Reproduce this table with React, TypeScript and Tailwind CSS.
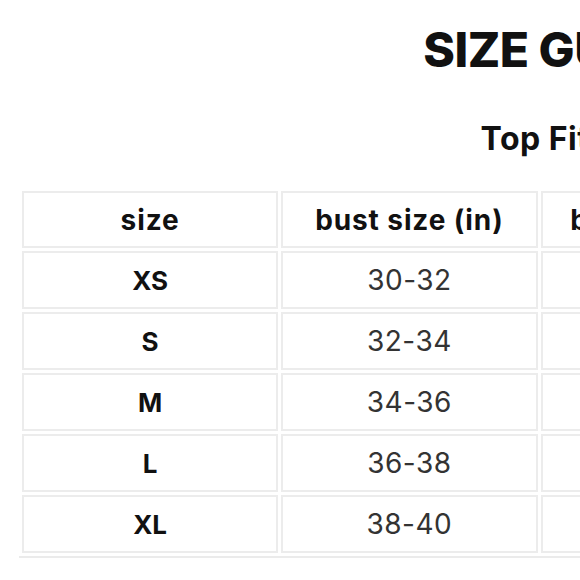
const rows = [
  { size: 'XS', bust: '30-32', band: '26-28', waist: '24-26' },
  { size: 'S', bust: '32-34', band: '28-30', waist: '26-28' },
  { size: 'M', bust: '34-36', band: '30-32', waist: '28-30' },
  { size: 'L', bust: '36-38', band: '32-34', waist: '30-32' },
  { size: 'XL', bust: '38-40', band: '34-36', waist: '32-34' },
]

export default function App() {
  return (
    <div className="h-[580px] w-[580px] overflow-hidden bg-white font-['Inter',sans-serif] text-[#111]">
      <div className="w-[1080px] pl-[19px] pt-[22px]">
        <div className="w-[1040px] text-center">
          <h1 className="pl-[30px] text-[48px] font-extrabold leading-[56px] tracking-[-0.5px]">SIZE GUIDE</h1>
          <h2 className="mt-[42px] pr-[8px] text-[32px] font-bold leading-[38px] tracking-[0.5px]">Top Fit</h2>
        </div>

        <table className="mt-[30px] w-[1040px] table-fixed border-separate border-spacing-[3px] border-b-2 border-[#ebebeb]">
          <thead>
            <tr>
              <th className="h-[57px] border-2 border-[#ececec] text-[28px] font-bold tracking-[0.9px]">size</th>
              <th className="h-[57px] border-2 border-[#ececec] text-[28px] font-bold tracking-[0.9px]">bust size (in)</th>
              <th className="h-[57px] border-2 border-[#ececec] text-[28px] font-bold tracking-[0.9px]">band size (in)</th>
              <th className="h-[57px] border-2 border-[#ececec] text-[28px] font-bold tracking-[0.9px]">waist size (in)</th>
            </tr>
          </thead>
          <tbody>
            {rows.map((r) => (
              <tr key={r.size}>
                <td className="h-[58px] border-2 border-[#ececec] text-center text-[26px] font-bold">{r.size}</td>
                <td className="h-[58px] border-2 border-[#ececec] text-center text-[28px] tracking-[0.5px] text-[#333]">{r.bust}</td>
                <td className="h-[58px] border-2 border-[#ececec] text-center text-[28px] tracking-[0.5px] text-[#333]">{r.band}</td>
                <td className="h-[58px] border-2 border-[#ececec] text-center text-[28px] tracking-[0.5px] text-[#333]">{r.waist}</td>
              </tr>
            ))}
          </tbody>
        </table>
      </div>
    </div>
  )
}
